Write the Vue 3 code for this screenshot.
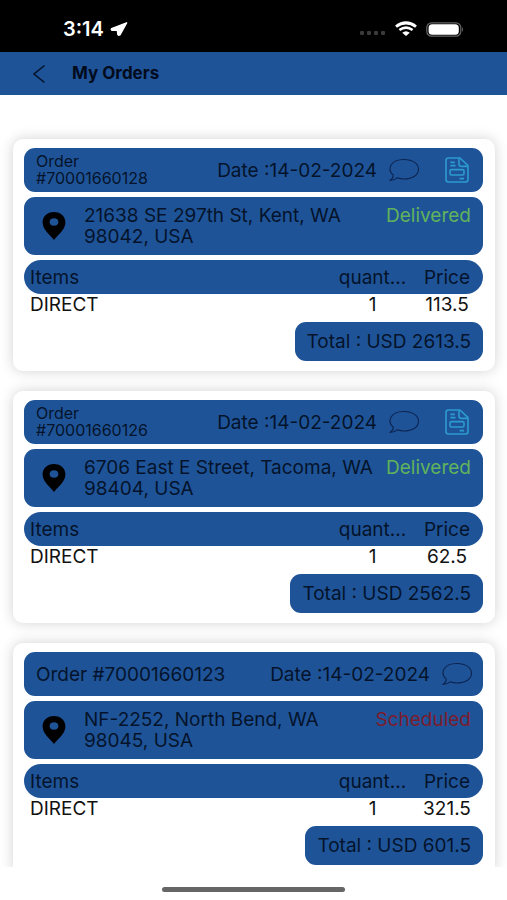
<template>
  <div class="screen">
    <div class="status-bar">
      <div class="clock">
        <span>3:14</span>
        <svg class="location" viewBox="0 0 18 14" aria-hidden="true">
          <path d="M16.6 0.8 L1.6 6.6 Q0.8 8 2 8.2 L7.4 8.4 L7.8 12.4 Q8.6 13.8 10 12.8 Z" fill="#fff" stroke="#fff" stroke-width="1.4" stroke-linejoin="round" />
        </svg>
      </div>
      <div class="signals">
        <span class="dots"><i v-for="n in 4" :key="n"></i></span>
        <svg class="wifi" viewBox="0 0 24 16" aria-hidden="true">
          <path d="M2 5.6 Q12 -1.8 22 5.6" fill="none" stroke="#fff" stroke-width="3" />
          <path d="M5.4 9 Q12 4.2 18.6 9" fill="none" stroke="#fff" stroke-width="2.6" />
          <path d="M8.2 11.8 Q12 8.6 15.8 11.8 L12 15 Z" fill="#fff" />
        </svg>
        <svg class="battery" viewBox="0 0 38 15" aria-hidden="true">
          <rect x="0.8" y="0.8" width="34" height="13.4" rx="4.8" fill="none" stroke="#666" stroke-width="1.2" />
          <rect x="2.6" y="2.2" width="30.2" height="10.6" rx="3.6" fill="#fff" />
          <path d="M36 5 Q38 7.5 36 10 Z" fill="#666" />
        </svg>
      </div>
    </div>

    <header class="nav-bar">
      <button class="back" type="button" aria-label="Back">
        <svg viewBox="0 0 14 20" aria-hidden="true">
          <path d="M12.5 1.5 L2 10 L12.5 18.5" fill="none" stroke="#04132b" stroke-width="1.6" />
        </svg>
      </button>
      <h1>My Orders</h1>
    </header>

    <main class="orders">
      <article v-for="order in orders" :key="order.id" class="card">
        <div class="panel order-head">
          <span class="order-id" :class="{ small: order.invoice }">Order #{{ order.id }}</span>
          <span class="date">Date :{{ order.date }}</span>
          <button class="chat" type="button" aria-label="Chat">
            <svg viewBox="0 0 32 24" aria-hidden="true">
              <path d="M5.3 17.2 C-1.2 11.5 2 1.5 16 1.5 C25 1.5 30.5 6 30.5 11.2 C30.5 17 24.5 21 16 21 C13.3 21 11.2 20.6 9.2 19.8 C7.2 21.5 4.6 22.4 1.8 22.4 C3.8 21.2 5.2 19.3 5.3 17.2 Z" fill="none" stroke="#0c2450" stroke-width="1.1" stroke-linejoin="round" />
            </svg>
          </button>
          <button v-if="order.invoice" class="invoice" type="button" aria-label="Invoice">
            <svg viewBox="0 0 24 26" fill="none" stroke="#2c9bd0" stroke-width="1.6" stroke-linejoin="round" aria-hidden="true">
              <path d="M3.5 1 H15 L23 8.6 V22.5 Q23 25 20.5 25 H3.5 Q1 25 1 22.5 V3.5 Q1 1 3.5 1 Z" />
              <path d="M14 1.4 V7 Q14 9.4 16.5 9.4 H22.6 M5.4 5.4 H9.8 M5.4 8.6 H10.6 M14.6 21.6 H19" />
              <rect x="5" y="12.6" width="14" height="5.4" rx="1.4" />
            </svg>
          </button>
        </div>

        <div class="panel address">
          <svg class="pin" viewBox="0 0 24 28" aria-hidden="true">
            <path d="M12 0 C5.2 0 0.6 4.4 0.6 10.4 C0.6 17.4 8 22.6 12 28 C16 22.6 23.4 17.4 23.4 10.4 C23.4 4.4 18.8 0 12 0 Z M12 6.2 C14.8 6.2 16.4 7.8 16.4 10 C16.4 12.2 14.8 13.8 12 13.8 C9.2 13.8 7.6 12.2 7.6 10 C7.6 7.8 9.2 6.2 12 6.2 Z" fill="#000" fill-rule="evenodd" />
          </svg>
          <p>{{ order.street }}<br />{{ order.zip }}</p>
          <span class="status" :class="order.status.toLowerCase()">{{ order.status }}</span>
        </div>

        <table>
          <thead>
            <tr>
              <th class="name">Items</th>
              <th class="quantity">quant...</th>
              <th class="price">Price</th>
            </tr>
          </thead>
          <tbody>
            <tr>
              <td class="name">DIRECT</td>
              <td class="quantity">1</td>
              <td class="price">{{ order.price }}</td>
            </tr>
          </tbody>
        </table>

        <div class="panel total">Total : USD {{ order.total }}</div>
      </article>
    </main>

    <footer class="home-area"><span></span></footer>
  </div>
</template>

<script setup>
const orders = [
  {
    id: '70001660128',
    date: '14-02-2024',
    invoice: true,
    street: '21638 SE 297th St, Kent, WA',
    zip: '98042, USA',
    status: 'Delivered',
    price: '113.5',
    total: '2613.5'
  },
  {
    id: '70001660126',
    date: '14-02-2024',
    invoice: true,
    street: '6706 East E Street, Tacoma, WA',
    zip: '98404, USA',
    status: 'Delivered',
    price: '62.5',
    total: '2562.5'
  },
  {
    id: '70001660123',
    date: '14-02-2024',
    invoice: false,
    street: 'NF-2252, North Bend, WA',
    zip: '98045, USA',
    status: 'Scheduled',
    price: '321.5',
    total: '601.5'
  }
]
</script>

<style>
body {
  margin: 0;
  background: #fff;
}
</style>

<style scoped>
.screen {
  display: flex;
  flex-direction: column;
  height: 100vh;
  overflow: hidden;
  background: #fff;
  color: #04132b;
  font-family: Inter, Roboto, sans-serif;
  font-size: 19px;
  line-height: 21px;
}

.status-bar {
  display: flex;
  flex: none;
  justify-content: space-between;
  align-items: center;
  box-sizing: border-box;
  height: 52px;
  padding: 6px 43px 0 63px;
  background: #000;
  color: #fff;
}

.clock {
  display: flex;
  align-items: center;
  gap: 6px;
  font-size: 20px;
  font-weight: 600;
}

.location {
  width: 18px;
  height: 14px;
}

.signals {
  display: flex;
  align-items: center;
}

.dots {
  display: flex;
  gap: 3px;
  margin: 8px 9px 0 0;
}

.dots i {
  width: 4px;
  height: 4px;
  border-radius: 1px;
  background: #3a3a3a;
}

.wifi {
  width: 24px;
  height: 16px;
  margin-right: 8px;
}

.battery {
  width: 38px;
  height: 15px;
}

.nav-bar {
  display: flex;
  flex: none;
  align-items: center;
  height: 43px;
  padding-left: 32px;
  background: #1f5397;
}

button {
  display: flex;
  padding: 0;
  border: 0;
  background: none;
  cursor: pointer;
}

.back svg {
  width: 14px;
  height: 20px;
}

h1 {
  margin: 0 0 0 26px;
  color: #020b1c;
  font-size: 17px;
  font-weight: 700;
}

.orders {
  display: flex;
  flex: 1;
  flex-direction: column;
  gap: 20px;
  min-height: 0;
  padding: 44px 12px 0 13px;
  overflow: hidden;
}

.card {
  display: flex;
  flex: none;
  flex-direction: column;
  box-sizing: border-box;
  padding: 9px 12px 10px 11px;
  border-radius: 10px;
  background: #fff;
  box-shadow: 0 0 14px rgba(0, 0, 0, 0.18);
}

.panel {
  display: flex;
  box-sizing: border-box;
  border-radius: 11px;
  background: #1f5397;
}

.order-head {
  align-items: center;
  height: 44px;
  padding: 0 10px 0 12px;
}

.order-id {
  margin-right: auto;
}

.order-id.small {
  width: 130px;
  font-size: 16px;
  line-height: 17px;
}

.chat {
  margin-left: 11px;
}

.chat svg {
  width: 32px;
  height: 24px;
}

.invoice {
  margin: 0 4px 0 25px;
}

.invoice svg {
  width: 24px;
  height: 26px;
}

.address {
  align-items: flex-start;
  height: 58px;
  margin-top: 5px;
  padding: 8px 12px 0 18px;
}

.pin {
  width: 24px;
  height: 28px;
  margin-top: 7px;
}

.address p {
  flex: 1;
  margin: 0 0 0 18px;
  white-space: nowrap;
}

.delivered {
  color: #60b35b;
}

.scheduled {
  color: #7b1c2e;
}

table {
  width: 100%;
  margin-top: 5px;
  border-collapse: separate;
  border-spacing: 0;
  table-layout: fixed;
}

th,
td {
  padding: 0;
  font-weight: 400;
  text-align: center;
  white-space: nowrap;
}

th {
  height: 34px;
  background: #1f5397;
}

td {
  height: 21px;
  color: #111;
}

th.name,
td.name {
  padding-left: 6px;
  text-align: left;
}

th.name {
  border-radius: 17px 0 0 17px;
}

.quantity {
  width: 77px;
}

.price {
  width: 72px;
}

th.price {
  border-radius: 0 17px 17px 0;
}

.total {
  align-self: flex-end;
  align-items: center;
  height: 39px;
  margin-top: 7px;
  padding: 0 12px;
}

.home-area {
  display: flex;
  flex: none;
  justify-content: center;
  align-items: center;
  box-sizing: border-box;
  height: 33px;
  padding-top: 12px;
  background: #fff;
}

.home-area span {
  width: 36%;
  height: 5px;
  border-radius: 3px;
  background: #666;
}
</style>
